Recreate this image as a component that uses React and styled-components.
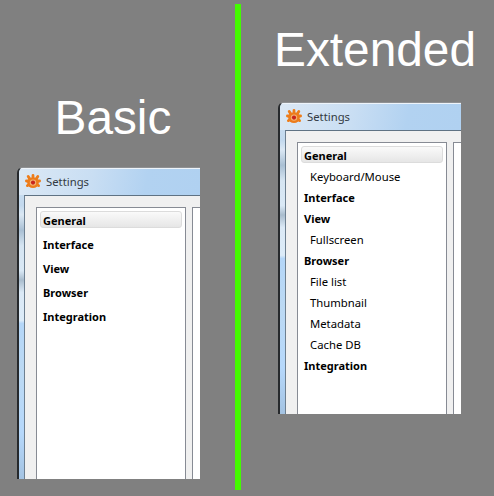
import React from 'react'
import styled, { createGlobalStyle } from 'styled-components'

const Global = createGlobalStyle`
  html, body { margin: 0; padding: 0; background: #808080; }
`

const Page = styled.div`
  width: 494px;
  height: 496px;
  background: #808080;
  display: flex;
  overflow: hidden;
`
const BasicColumn = styled.section`
  width: 235px;
  padding: 90px 0 0 17px;
  box-sizing: border-box;
`
const ExtendedColumn = styled.section`
  width: 253px;
  padding: 22px 0 0 37px;
  box-sizing: border-box;
`
const Divider = styled.div`
  width: 6px;
  height: 486px;
  margin-top: 4px;
  background: #43fb00;
`
const Heading = styled.h1`
  margin: 0;
  width: 183px;
  height: ${(p) => p.$height}px;
  font: 400 47.8px/56px "Liberation Sans", Arial, sans-serif;
  color: #fff;
  white-space: nowrap;
  text-indent: ${(p) => p.$indent}px;
`
const Window = styled.div`
  width: 183px;
  height: 312px;
  box-sizing: border-box;
  border-left: 2px solid #26292c;
  border-top: 1px solid #8f9194;
  border-top-left-radius: 6px;
  background: linear-gradient(180deg, #cfe2f3 0%, #c3d9ee 12%, #dbe8f4 15%, #a9bfd3 20%, #d6e5f2 25%, #d9e8f5 33%, #a9bccd 36%, #dbe9f6 40%, #dcebf8 49%, #b4d6f8 50%, #bcd9f3 66%, #b6d8fb 85%, #a4c3e2 100%);
  overflow: hidden;
  display: flex;
  flex-direction: column;
`
const TitleBar = styled.div`
  height: 27px;
  flex: none;
  display: flex;
  align-items: center;
  gap: 5px;
  padding-left: 6px;
  box-shadow: inset 0 1px 0 #eef4fa;
  background: linear-gradient(100deg, #dbe8f5 0%, #c9def3 40%, #b2d2f1 70%, #b0d1f1 100%);
`
const Title = styled.span`
  font: 400 11.3px "Noto Sans", sans-serif;
  color: #333a42;
`
const Body = styled.div`
  flex: 1;
  margin-left: 5px;
  border-left: 1px solid #6d7f90;
  border-top: 1px solid #5f7283;
  background: #f0f0f0;
  padding: 11px 0 0 11px;
  display: flex;
  gap: 6px;
`
const Sidebar = styled.nav`
  width: 142px;
  flex: none;
  background: #fff;
  border: 1px solid #878b94;
  border-bottom: none;
  padding: 3px 3px 0;
  display: flex;
  flex-direction: column;
`
const Content = styled.div`
  flex: 1;
  background: #fff;
  border-left: 1px solid #878b94;
  border-top: 1px solid #878b94;
`
const Item = styled.div`
  height: ${(p) => p.$height}px;
  flex: none;
  box-sizing: border-box;
  display: flex;
  align-items: center;
  padding-top: 1px;
  padding-left: ${(p) => (p.$sub ? 9 : 3)}px;
  font: ${(p) => (p.$sub ? '400 11.3px' : '700 11px')} "Noto Sans", sans-serif;
  color: #000;
`
const SelectedItem = styled(Item)`
  height: 17px;
  margin-bottom: ${(p) => p.$gap}px;
  padding-left: 2px;
  border: 1px solid #dcdcdc;
  border-radius: 3px;
  background: linear-gradient(180deg, #fafafa 0%, #e6e6e6 100%);
`

const Logo = () => (
  <svg width="16" height="15" viewBox="0 0 16 15">
    <g stroke="#ee7d1a" strokeWidth="2.8" strokeLinecap="round">
      <path d="M8 1.4v3M3.2 2.4l1.5 2.4M12.8 2.4l-1.5 2.4M1.4 7h2M14.6 7h-2M2.4 11.6l2-1.4M13.6 11.6l-2-1.4" />
    </g>
    <ellipse cx="8" cy="8.6" rx="5.8" ry="5.4" fill="#ec7c1c" />
    <circle cx="8" cy="8.6" r="3.2" fill="#f2b372" />
    <circle cx="8" cy="8.6" r="2.1" fill="#c8241c" />
  </svg>
)

const SettingsWindow = ({ items, rowHeight, firstGap }) => (
  <Window>
    <TitleBar>
      <Logo />
      <Title>Settings</Title>
    </TitleBar>
    <Body>
      <Sidebar>
        {items.map((it, i) =>
          i === 0 ? (
            <SelectedItem key={it.label} $gap={firstGap}>{it.label}</SelectedItem>
          ) : (
            <Item key={it.label} $sub={it.sub} $height={rowHeight}>{it.label}</Item>
          )
        )}
      </Sidebar>
      <Content />
    </Body>
  </Window>
)

const basicItems = [
  { label: 'General' },
  { label: 'Interface' },
  { label: 'View' },
  { label: 'Browser' },
  { label: 'Integration' },
]

const extendedItems = [
  { label: 'General' },
  { label: 'Keyboard/Mouse', sub: true },
  { label: 'Interface' },
  { label: 'View' },
  { label: 'Fullscreen', sub: true },
  { label: 'Browser' },
  { label: 'File list', sub: true },
  { label: 'Thumbnail', sub: true },
  { label: 'Metadata', sub: true },
  { label: 'Cache DB', sub: true },
  { label: 'Integration' },
]

export default function App() {
  return (
    <Page>
      <Global />
      <BasicColumn>
        <Heading $height={77} $indent={37.5}>Basic</Heading>
        <SettingsWindow items={basicItems} rowHeight={24} firstGap={4} />
      </BasicColumn>
      <Divider />
      <ExtendedColumn>
        <Heading $height={80} $indent={-4}>Extended</Heading>
        <SettingsWindow items={extendedItems} rowHeight={21} firstGap={2} />
      </ExtendedColumn>
    </Page>
  )
}
